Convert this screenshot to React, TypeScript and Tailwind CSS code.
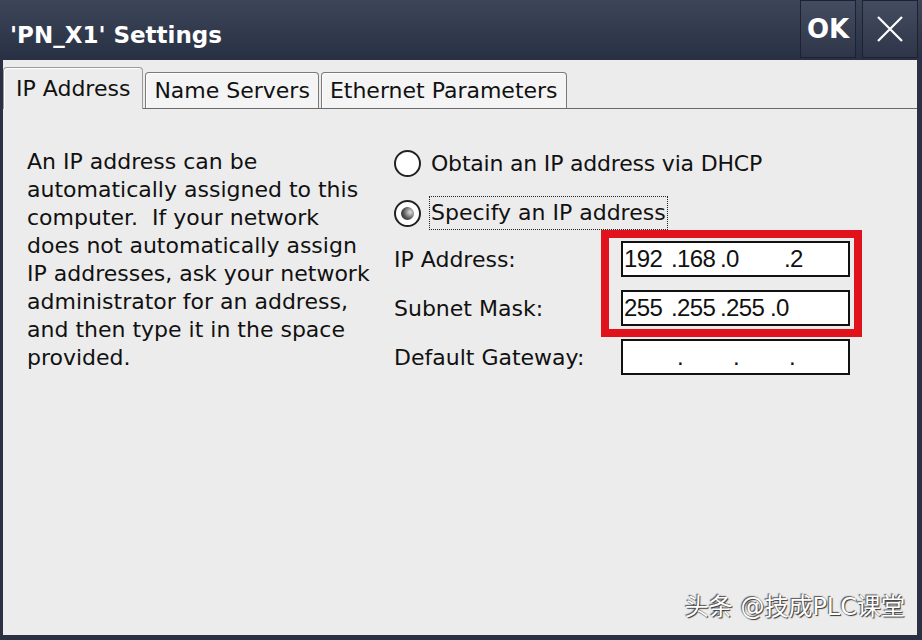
import React from 'react';

const font = { fontFamily: 'Tahoma, "DejaVu Sans", "Noto Sans CJK SC", sans-serif' };

function Tab({ label, active }: { label: string; active?: boolean }) {
  if (active) {
    return (
      <div className="relative z-10 -mb-px flex h-[42px] items-center rounded-t-[4px] border border-b-0 border-[#9a9a9a] bg-[#ececec] px-[12px] text-[22px] text-[#111] shadow-[inset_1px_1px_0_#fff]">
        {label}
      </div>
    );
  }
  return (
    <div className="flex h-[36px] items-center rounded-t-[4px] border border-b-0 border-[#7a7a7a] bg-[#f4f4f4] px-[8px] text-[22px] text-[#111] shadow-[inset_1px_1px_0_#fff]">
      {label}
    </div>
  );
}

function Radio({ checked }: { checked?: boolean }) {
  return (
    <div className="flex h-[27px] w-[27px] items-center justify-center rounded-full border-2 border-[#222] bg-white">
      {checked && <div className="h-[13px] w-[13px] rounded-full bg-[radial-gradient(circle_at_70%_40%,#e0e0e0,#555_55%,#111)]" />}
    </div>
  );
}

// widths of each octet slot, in px
function IpField({ parts, widths }: { parts: string[]; widths: number[] }) {
  return (
    <div
      className="flex h-[36px] w-[229px] items-center border-2 border-[#111] bg-white pl-[1px] text-[24px] leading-none tracking-[-0.6px] text-[#111]"
      style={{ fontFamily: '"Liberation Sans", Arial, sans-serif' }}
    >
      {parts.map((p, i) => (
        <span key={i} className="shrink-0 whitespace-pre" style={{ width: widths[i] }}>
          {i > 0 ? '.' : ''}
          {p}
        </span>
      ))}
    </div>
  );
}

export default function App() {
  return (
    <div className="flex h-[640px] w-[922px] flex-col bg-[#2b3142]" style={font}>
      <div className="flex h-[60px] items-stretch bg-gradient-to-b from-[#3d4559] to-[#283043]">
        <div className="flex flex-1 items-center pl-[10px] pt-[10px] text-[23px] font-bold text-white">
          'PN_X1' Settings
        </div>
        <div className="flex gap-[6px] pr-[4px]">
          <button className="flex h-[58px] w-[56px] items-center justify-center border border-[#1d2231] bg-gradient-to-b from-[#444c61] to-[#2f3649] text-[26px] font-bold text-white">
            OK
          </button>
          <button className="flex h-[58px] w-[56px] items-center justify-center border border-[#1d2231] bg-gradient-to-b from-[#444c61] to-[#2f3649]">
            <svg width="30" height="30" viewBox="0 0 30 30">
              <path d="M3 3 L27 27 M27 3 L3 27" stroke="#fff" strokeWidth="2.2" fill="none" />
            </svg>
          </button>
        </div>
      </div>

      <div className="mx-[3px] mb-[5px] mr-[5px] flex flex-1 flex-col bg-[#ececec]">
        <div className="flex items-end gap-[2px] border-b border-[#6a6a6a] pt-[7px]">
          <Tab label="IP Address" active />
          <Tab label="Name Servers" />
          <Tab label="Ethernet Parameters" />
        </div>

        <div className="flex flex-1">
          <p className="w-[370px] pl-[24px] pt-[39px] text-[22px] leading-[28px] text-[#111]">
            An IP address can be automatically assigned to this computer.&nbsp; If your network does not automatically assign IP addresses, ask your network administrator for an address, and then type it in the space provided.
          </p>

          <div className="flex flex-col pl-[21px] pt-[38px] text-[22px] text-[#111]">
            <div className="flex items-center gap-[10px]">
              <Radio />
              <span className="tracking-[-0.2px]">Obtain an IP address via DHCP</span>
            </div>
            <div className="mt-[16px] flex items-center gap-[8px]">
              <Radio checked />
              <span className="border border-dotted border-[#222] px-[1px] leading-[32px]">Specify an IP address</span>
            </div>

            <div className="flex">
              <div className="flex w-[207px] flex-col pt-[5px] leading-[49px]">
                <span>IP Address:</span>
                <span>Subnet Mask:</span>
                <span>Default Gateway:</span>
              </div>
              <div className="flex flex-col">
                <div className="flex w-[261px] flex-col gap-[13px] border-[8px] border-[#e0121c] py-[3px] pl-[12px]">
                  <IpField parts={['192', '168', '0', '2']} widths={[47, 49, 64, 40]} />
                  <IpField parts={['255', '255', '255', '0']} widths={[47, 49, 50, 30]} />
                </div>
                <div className="ml-[20px] mt-[2px]">
                  <IpField parts={['', '', '', '']} widths={[53, 56, 56, 30]} />
                </div>
              </div>
            </div>
          </div>
        </div>

        <div className="flex justify-end pb-[10px] pr-[12px] text-[24px] text-white [text-shadow:1px_1px_1px_#333,-1px_-1px_1px_#555]">
          头条 @技成PLC课堂
        </div>
      </div>
    </div>
  );
}
